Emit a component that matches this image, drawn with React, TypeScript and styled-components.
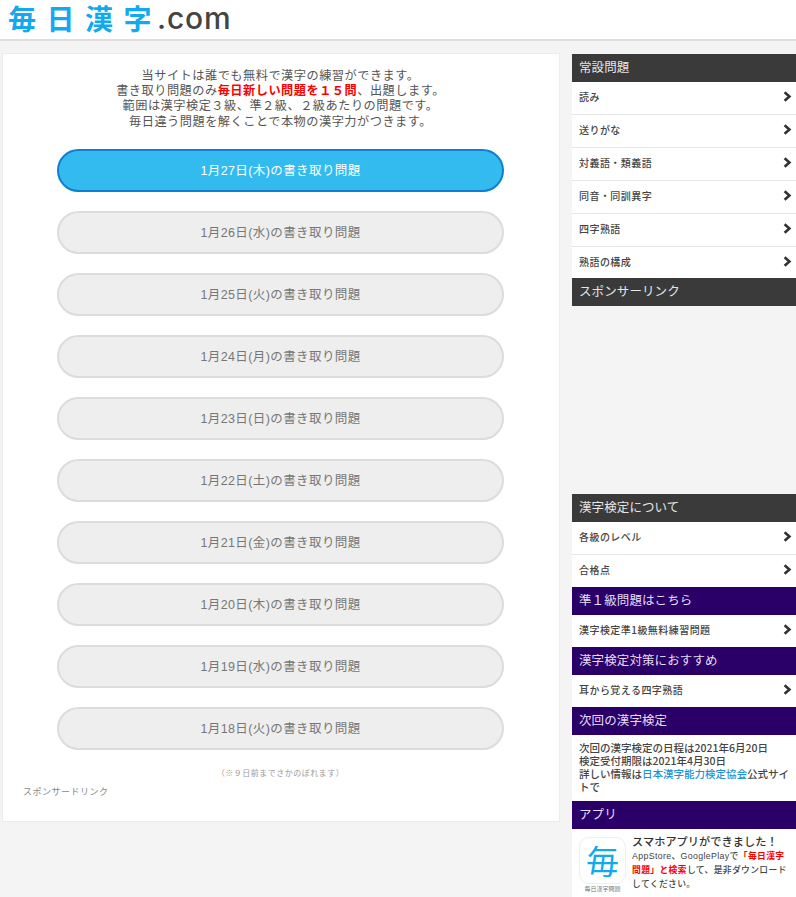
import React from "react";
import styled, { createGlobalStyle } from "styled-components";

const Global = createGlobalStyle`
  html, body { margin: 0; padding: 0; background: #f4f4f4; }
  body { font-family: "Noto Sans CJK JP", "Noto Sans", sans-serif; color: #444; overflow: hidden; }
  * { box-sizing: border-box; }
`;

const Page = styled.div`
  width: 796px;
  height: 897px;
  overflow: hidden;
`;

const Header = styled.header`
  height: 41px;
  background: #fff;
  border-bottom: 2px solid #dedede;
  padding: 1px 0 0 8px;
  display: flex;
  align-items: flex-start;
`;

const LogoKanji = styled.span`
  font-size: 28px;
  font-weight: 700;
  color: #12a9ee;
  letter-spacing: 10.5px;
  line-height: 34px;
  margin-right: -5px;
`;

const LogoCom = styled.span`
  font-family: "Inter", "Liberation Sans", sans-serif;
  font-size: 30px;
  font-weight: 500;
  color: #444;
  line-height: 34px;
  letter-spacing: 0.8px;
`;

const Columns = styled.div`
  display: flex;
  align-items: flex-start;
  padding: 12px 0 0 2px;
  gap: 12px;
`;

const Main = styled.main`
  width: 558px;
  height: 769px;
  background: #fff;
  border: 1px solid #ececec;
  padding: 14px 55px 0 54px;
`;

const Intro = styled.p`
  margin: 0 0 20px;
  text-align: center;
  font-size: 12.2px;
  line-height: 15.2px;
  letter-spacing: 0.5px;
  color: #555;
  white-space: nowrap;
`;

const Red = styled.strong`
  color: #f00;
  font-weight: 700;
`;

const DateList = styled.div`
  display: flex;
  flex-direction: column;
  gap: 19px;
`;

const DateButton = styled.a<{ $active?: boolean }>`
  display: flex;
  align-items: center;
  justify-content: center;
  height: 43px;
  border-radius: 22px;
  font-family: "Liberation Sans", "Noto Sans CJK JP", sans-serif;
  font-size: 12.5px;
  letter-spacing: 0.4px;
  padding-bottom: 2px;
  background: ${(p) => (p.$active ? "#33bbf0" : "#eeeeee")};
  border: 2px solid ${(p) => (p.$active ? "#0f7fd0" : "#dcdcdc")};
  color: ${(p) => (p.$active ? "#fff" : "#777")};
`;

const Note = styled.div`
  margin-top: 16px;
  text-align: center;
  font-size: 8px;
  line-height: 14px;
  letter-spacing: 0.5px;
  color: #999;
`;

const Sponsor = styled.div`
  margin: 5px 0 0 -34px;
  font-size: 9px;
  line-height: 14px;
  letter-spacing: 0.5px;
  color: #888;
`;

const Side = styled.aside`
  width: 224px;
  flex: none;
  margin-top: 1px;
`;

const SideTitle = styled.h2<{ $purple?: boolean }>`
  margin: 0;
  height: 28px;
  padding: 0 0 3px 7px;
  display: flex;
  align-items: center;
  font-size: 12.5px;
  font-weight: 400;
  letter-spacing: 0.1px;
  background: ${(p) => (p.$purple ? "#2a0068" : "#3a3a3a")};
  color: ${(p) => (p.$purple ? "#e4dcf4" : "#e6e6e6")};
`;

const SideItem = styled.a<{ $height?: number; $last?: boolean }>`
  height: ${(p) => p.$height ?? 33}px;
  background: #fff;
  border-bottom: ${(p) => (p.$last ? "none" : "1px solid #e6e6e6")};
  padding: 0 4px 3px 7px;
  display: flex;
  align-items: center;
  justify-content: space-between;
  font-size: 10px;
  font-weight: 500;
  letter-spacing: 0.45px;
  color: #444;
`;

const AdSpace = styled.div`
  height: 188px;
`;

const InfoBlock = styled.div`
  background: #fff;
  padding: 6px 4px 0 7px;
  height: 66px;
  font-size: 10.5px;
  font-weight: 500;
  line-height: 13px;
  color: #444;
`;

const BlueLink = styled.a`
  color: #1c93d8;
`;

const AppBlock = styled.div`
  background: #fff;
  height: 68px;
  padding: 8px 8px 0 7px;
  display: flex;
  gap: 6px;
`;

const AppIconCol = styled.div`
  width: 47px;
  flex: none;
  display: flex;
  flex-direction: column;
  align-items: center;
`;

const AppIcon = styled.div`
  width: 47px;
  height: 47px;
  border: 1px solid #eee;
  border-radius: 10px;
  display: flex;
  align-items: center;
  justify-content: center;
  color: #12a9ee;
  font-size: 33px;
  line-height: 1;
`;

const AppIconLabel = styled.div`
  font-size: 6px;
  line-height: 9px;
  color: #777;
  white-space: nowrap;
`;

const AppText = styled.div`
  flex: 1;
  min-width: 0;
  margin-top: -3px;
`;

const AppHead = styled.div`
  font-size: 11.2px;
  font-weight: 500;
  line-height: 15px;
  letter-spacing: 0.05px;
  color: #333;
  white-space: nowrap;
`;

const AppBody = styled.div`
  font-family: "Liberation Sans", "Noto Sans CJK JP", sans-serif;
  font-size: 8.8px;
  font-weight: 500;
  line-height: 14px;
  letter-spacing: 0.35px;
  color: #444;
`;

const Chevron = () => (
  <svg width="9" height="11" viewBox="0 0 9 11" aria-hidden="true">
    <path d="M1.6 1.2 6.4 5.5 1.6 9.8" fill="none" stroke="#333" strokeWidth="2.6" />
  </svg>
);

const dates = [
  "1月27日(木)", "1月26日(水)", "1月25日(火)", "1月24日(月)", "1月23日(日)",
  "1月22日(土)", "1月21日(金)", "1月20日(木)", "1月19日(水)", "1月18日(火)",
];

const Item = ({ label, last, height }: { label: string; last?: boolean; height?: number }) => (
  <SideItem $last={last} $height={height}>
    {label}
    <Chevron />
  </SideItem>
);

export default function App() {
  return (
    <Page>
      <Global />
      <Header>
        <LogoKanji>毎日漢字</LogoKanji>
        <LogoCom>.com</LogoCom>
      </Header>
      <Columns>
        <Main>
          <Intro>
            当サイトは誰でも無料で漢字の練習ができます。<br />
            書き取り問題のみ<Red>毎日新しい問題を１５問</Red>、出題します。<br />
            範囲は漢字検定３級、準２級、２級あたりの問題です。<br />
            毎日違う問題を解くことで本物の漢字力がつきます。
          </Intro>
          <DateList>
            {dates.map((d, i) => (
              <DateButton key={d} $active={i === 0}>{d}の書き取り問題</DateButton>
            ))}
          </DateList>
          <Note>（※９日前までさかのぼれます）</Note>
          <Sponsor>スポンサードリンク</Sponsor>
        </Main>
        <Side>
          <SideTitle>常設問題</SideTitle>
          <Item label="読み" />
          <Item label="送りがな" />
          <Item label="対義語・類義語" />
          <Item label="同音・同訓異字" />
          <Item label="四字熟語" />
          <Item label="熟語の構成" height={31} last />
          <SideTitle>スポンサーリンク</SideTitle>
          <AdSpace />
          <SideTitle>漢字検定について</SideTitle>
          <Item label="各級のレベル" />
          <Item label="合格点" height={32} last />
          <SideTitle $purple>準１級問題はこちら</SideTitle>
          <Item label="漢字検定準1級無料練習問題" height={32} last />
          <SideTitle $purple>漢字検定対策におすすめ</SideTitle>
          <Item label="耳から覚える四字熟語" height={32} last />
          <SideTitle $purple>次回の漢字検定</SideTitle>
          <InfoBlock>
            次回の漢字検定の日程は2021年6月20日<br />
            検定受付期限は2021年4月30日<br />
            詳しい情報は<BlueLink>日本漢字能力検定協会</BlueLink>公式サイトで
          </InfoBlock>
          <SideTitle $purple>アプリ</SideTitle>
          <AppBlock>
            <AppIconCol>
              <AppIcon>毎</AppIcon>
              <AppIconLabel>毎日漢字問題</AppIconLabel>
            </AppIconCol>
            <AppText>
              <AppHead>スマホアプリができました！</AppHead>
              <AppBody>
                AppStore、GooglePlayで<Red>「毎日漢字問題」と検索</Red>して、是非ダウンロードしてください。
              </AppBody>
            </AppText>
          </AppBlock>
        </Side>
      </Columns>
    </Page>
  );
}
